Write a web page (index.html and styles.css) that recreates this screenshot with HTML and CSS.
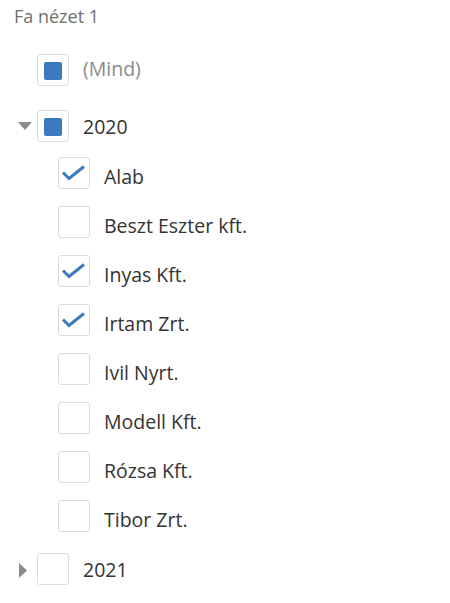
FILE: index.html
```html
<!DOCTYPE html>
<html lang="hu">
<head>
<meta charset="utf-8">
<title>Fa nézet</title>
<link rel="stylesheet" href="styles.css">
</head>
<body>
<div class="panel">
  <div class="title">Fa nézet 1</div>
  <div class="tree">
    <div class="row top mind">
      <span class="toggle"></span>
      <span class="box partial"></span>
      <span class="label muted">(Mind)</span>
    </div>
    <div class="row top year-open">
      <span class="toggle"><svg width="14" height="8" viewBox="0 0 14 8"><path d="M0 0H14L7 8Z" fill="#8a8a8a"/></svg></span>
      <span class="box partial"></span>
      <span class="label">2020</span>
    </div>
    <div class="children">
      <div class="row child"><span class="box checked"><svg width="32" height="32" viewBox="0 0 32 32"><path d="M5 15.5L11 21.5L26 9.5" fill="none" stroke="#3a7abd" stroke-width="3"/></svg></span><span class="label">Alab</span></div>
      <div class="row child"><span class="box"></span><span class="label">Beszt Eszter kft.</span></div>
      <div class="row child"><span class="box checked"><svg width="32" height="32" viewBox="0 0 32 32"><path d="M5 15.5L11 21.5L26 9.5" fill="none" stroke="#3a7abd" stroke-width="3"/></svg></span><span class="label">Inyas Kft.</span></div>
      <div class="row child"><span class="box checked"><svg width="32" height="32" viewBox="0 0 32 32"><path d="M5 15.5L11 21.5L26 9.5" fill="none" stroke="#3a7abd" stroke-width="3"/></svg></span><span class="label">Irtam Zrt.</span></div>
      <div class="row child"><span class="box"></span><span class="label">Ivil Nyrt.</span></div>
      <div class="row child"><span class="box"></span><span class="label">Modell Kft.</span></div>
      <div class="row child"><span class="box"></span><span class="label">Rózsa Kft.</span></div>
      <div class="row child"><span class="box"></span><span class="label">Tibor Zrt.</span></div>
    </div>
    <div class="row top year-closed">
      <span class="toggle"><svg width="8" height="15" viewBox="0 0 8 15"><path d="M0 0V15L8 7.5Z" fill="#8a8a8a"/></svg></span>
      <span class="box"></span>
      <span class="label">2021</span>
    </div>
  </div>
</div>
</body>
</html>
```
FILE: styles.css
```css
html, body {
  margin: 0;
  padding: 0;
  background: #ffffff;
}
body {
  font-family: "Open Sans", "Noto Sans", sans-serif;
  color: #333333;
}
.panel {
  padding: 0 0 0 14px;
}
.title {
  font-size: 18px;
  line-height: 32px;
  color: #707070;
  margin-bottom: 22px;
}
.tree {
  display: flex;
  flex-direction: column;
}
.row {
  display: flex;
  align-items: flex-start;
  height: 32px;
}
.toggle {
  width: 23px;
  height: 32px;
  display: flex;
  align-items: center;
  justify-content: flex-start;
  padding-left: 4px;
  box-sizing: border-box;
}
.box {
  width: 32px;
  height: 32px;
  box-sizing: border-box;
  border: 1px solid #dcdcdc;
  border-radius: 3px;
  background: #fff;
  flex: none;
  position: relative;
}
.box svg {
  position: absolute;
  left: -1px;
  top: -1px;
}
.box.partial::after {
  content: "";
  position: absolute;
  left: 6px;
  top: 7px;
  width: 18px;
  height: 18px;
  border-radius: 2px;
  background: #3a7abd;
}
.label {
  font-size: 19.5px;
  line-height: 32px;
  margin-left: 14px;
  white-space: nowrap;
}
.child .label {
  padding-top: 4px;
}
.mind .label {
  margin-top: -1.5px;
}
.year-open .label,
.year-closed .label {
  padding-top: 1px;
}
.label.muted {
  color: #8a8a8a;
}
.mind {
  margin-bottom: 24px;
}
.year-open {
  margin-bottom: 15px;
}
.children {
  display: flex;
  flex-direction: column;
  gap: 17px;
  padding-left: 44px;
  margin-bottom: 21px;
}
.year-closed .toggle {
  padding-left: 5px;
  padding-top: 2px;
}
```
